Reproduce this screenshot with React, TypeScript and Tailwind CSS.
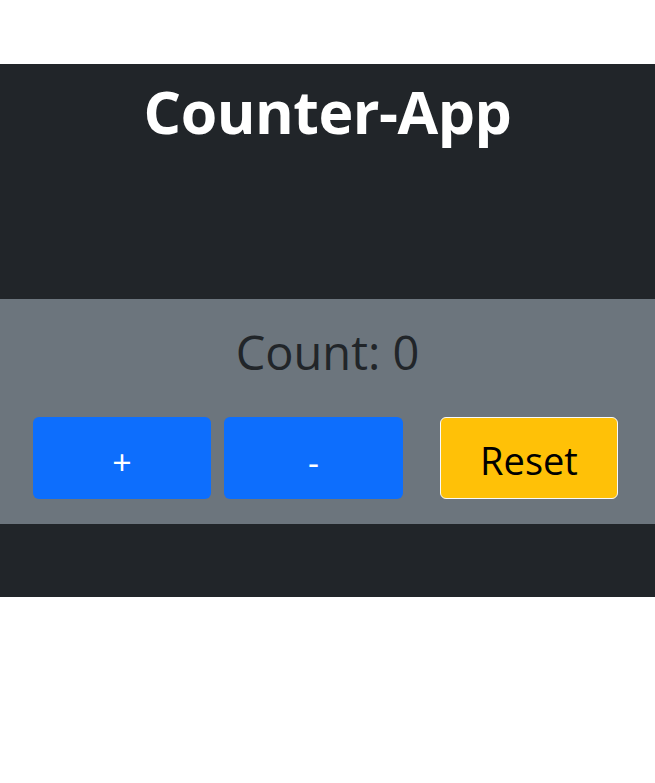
export default function App() {
  return (
    <div className="min-h-[783px] bg-white pt-16" style={{ fontFamily: '"Open Sans", "Noto Sans", sans-serif' }}>
      <div className="bg-[#212529]">
        <div className="h-[235px] pt-[12px] text-center">
          <h1 className="text-[59px] font-bold leading-[1.2] text-white tracking-[-0.5px]">Counter-App</h1>
        </div>
        <div className="h-[225px] bg-[#6c757d] pt-[25px]">
          <h2 className="text-center text-[47px] leading-[1.2] text-[#212529]">Count: 0</h2>
          <div className="mt-[37px] flex pl-[33px]">
            <button className="h-[82px] w-[178px] rounded-md bg-[#0d6efd] pt-[8px] text-[34px] text-white">+</button>
            <button className="ml-[13px] h-[82px] w-[179px] rounded-md bg-[#0d6efd] pt-[8px] text-[34px] text-white">-</button>
            <button className="ml-[37px] h-[82px] w-[178px] rounded-md border border-[#f8f9fa] bg-[#ffc107] pt-[4px] text-[38px] text-black">Reset</button>
          </div>
        </div>
        <div className="h-[73px]" />
      </div>
    </div>
  );
}
